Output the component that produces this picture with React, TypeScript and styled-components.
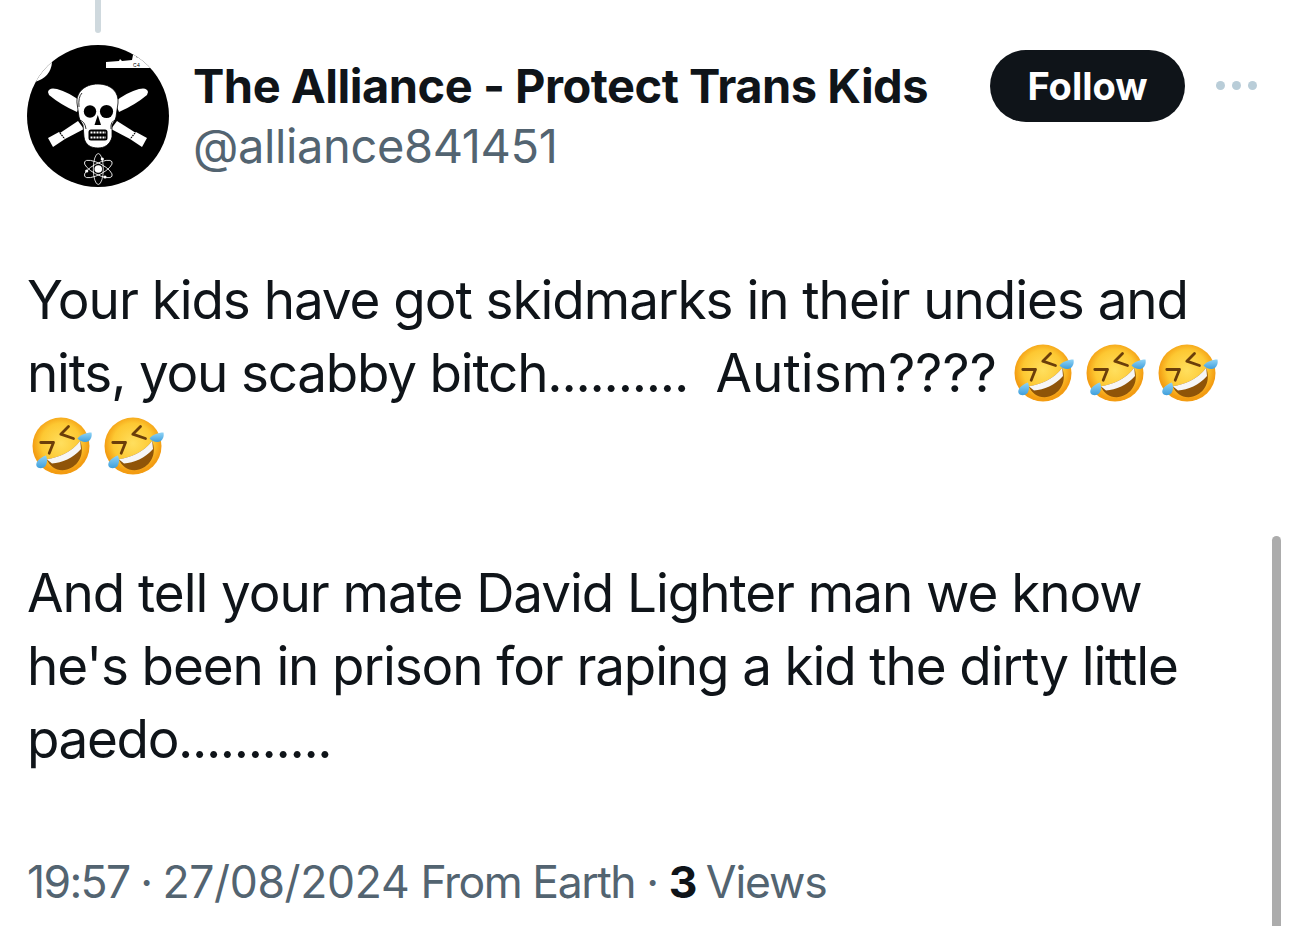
import React from "react";
import styled, { createGlobalStyle } from "styled-components";

const Global = createGlobalStyle`
  html, body { margin: 0; padding: 0; background: #fff; }
  #root { width: 1290px; height: 926px; }
`;
const Page = styled.div`
  position: relative; width: 1290px; height: 926px; overflow: hidden; background: #fff;
  display: flex; flex-direction: column; font-family: Inter, "Liberation Sans", sans-serif; color: #0f1419;
`;
const ThreadLine = styled.div`
  width: 6px; height: 33px; margin-left: 95px; background: #cfd9de; border-radius: 0 0 3px 3px; flex: none;
`;
const Header = styled.header`
  display: flex; align-items: flex-start; margin-top: 12px; padding-left: 27px; height: 142px; flex: none;
`;
const Avatar = styled.svg`
  width: 142px; height: 142px; flex: none; display: block;
`;
const Names = styled.div`
  margin-left: 24px; width: 797px; flex: none; display: flex; flex-direction: column; padding-top: 11px;
`;
const Name = styled.div`
  font-size: 47px; line-height: 60px; font-weight: 700; letter-spacing: -0.5px; white-space: nowrap;
`;
const Handle = styled.div`
  font-size: 47px; line-height: 60px; font-weight: 400; color: #536471; letter-spacing: -0.37px; white-space: nowrap;
`;
const FollowButton = styled.button`
  width: 195px; height: 72px; margin-top: 5px; border: 0; border-radius: 36px; background: #0f1419; color: #fff; flex: none;
  font-family: Inter, sans-serif; font-size: 38px; font-weight: 700; letter-spacing: 0; padding: 0;
`;
const More = styled.div`
  display: flex; gap: 7px; margin: 36px 0 0 31px; flex: none;
`;
const Dot = styled.span`
  width: 9px; height: 9px; border-radius: 50%; background: #b9cdd8;
`;
const Body = styled.main`
  margin-top: 77px; padding-left: 27px; display: flex; flex-direction: column;
`;
const Line = styled.div`
  height: 73.2px; line-height: 73.2px; font-size: 53px; letter-spacing: -1.05px; white-space: pre; display: flex; align-items: center;
`;
const Tracked = styled.span<{ $spacing: number }>`
  letter-spacing: ${(p) => p.$spacing}px;
`;
const EmojiIcon = styled.svg<{ $start?: number }>`
  width: 62px; height: 62px; margin-left: ${(p) => p.$start ?? 10}px; flex: none;
`;
const Meta = styled.footer`
  margin-top: 76px; padding-left: 27px; font-size: 44.5px; line-height: 60px; color: #536471; letter-spacing: -1.15px; white-space: pre;
`;
const Count = styled.b`
  color: #0f1419; font-weight: 700; letter-spacing: -3px;
`;
const Scrollbar = styled.div`
  position: absolute; left: 1272px; top: 536px; bottom: 0; width: 9px; background: #acacac; border-radius: 4.5px 4.5px 0 0;
`;

const Emoji = ({ start }: { start?: number }) => (
  <EmojiIcon $start={start} viewBox="0 0 62 62">
    <defs>
      <radialGradient id="face" cx="50%" cy="45%" r="50%">
        <stop offset="0%" stopColor="#ffdf5e" />
        <stop offset="70%" stopColor="#fdc832" />
        <stop offset="100%" stopColor="#f39c12" />
      </radialGradient>
      <linearGradient id="drop" x1="0" y1="0" x2="0" y2="1">
        <stop offset="0%" stopColor="#8fd3f6" />
        <stop offset="100%" stopColor="#3f9fdc" />
      </linearGradient>
    </defs>
    <circle cx="30" cy="30" r="28.5" fill="url(#face)" />
    <path d="M15.8 43.2 C27 42 41 36 49.2 24.8 C54 38 48 50 36 53.5 C27 56 19 51 15.8 43.2Z" fill="#8f5408" />
    <path d="M15.8 43.2 C27 42 41 36 49.2 24.8 L50 33 C42 42 31 47 21 47.5Z" fill="#f6f6f6" />
    <path d="M37.5 10.5 L29.8 18.2 L42.5 22.5 M9.8 26.5 L22.5 26.5 L18.2 37.2" fill="none" stroke="#6b3e0a" strokeWidth="2.8" strokeLinecap="round" strokeLinejoin="round" />
    <path d="M46.5 22.5 C49 19 55 16.5 60.5 16.5 C61.5 21 59 26 54.5 26 C51 26 48.5 24.5 46.5 22.5Z" fill="url(#drop)" />
    <path d="M15 39.5 C16.5 43 16.5 47 14.5 50 C12 53 7 53 5.5 50 C4 46 9 41.5 15 39.5Z" fill="url(#drop)" />
  </EmojiIcon>
);

export default function App() {
  return (
    <Page>
      <Global />
      <ThreadLine />
      <Header>
        <Avatar viewBox="0 0 142 142">
          <defs>
            <clipPath id="disc"><circle cx="71" cy="71" r="71" /></clipPath>
          </defs>
          <g clipPath="url(#disc)">
            <rect width="142" height="142" fill="#000" />
            <path d="M8 37 Q24 32 25 17 L8 17Z" fill="#fff" />
            <path d="M79 23 V17 L92 16 L93 14 L95 16 L105 15 L106 10 L109 10 L110 13 L112 9 L130 23Z" fill="#fff" />
            <text x="106" y="22" fontSize="5" fontFamily="Inter, sans-serif" fill="#000">C4</text>
            <path d="M21 47 Q22 42 30 44 Q44 48 54 57 L50 67 Q34 60 22 50Z" fill="#fff" />
            <path d="M121 47 Q120 42 112 44 Q98 48 88 57 L92 67 Q108 60 120 50Z" fill="#fff" />
            <path d="M33 88 L51 76 L57 84 L38 94Z" fill="#fff" />
            <path d="M109 88 L90 76 L84 84 L103 94Z" fill="#fff" />
            <path d="M21 93 L32 87 L38 94 L26 102Z" fill="#fff" />
            <path d="M120 93 L109 87 L103 94 L115 102Z" fill="#fff" />
            <path d="M33 88 L37 93 M108 88 L104 93" stroke="#000" strokeWidth="1.2" strokeDasharray="1.5 1" />
            <path d="M71 39 C85 39 92 48 91 58 L89 72 L88 75 L85 80 L85 92 C83 100 77 103 71 103 C64 103 58 100 57 92 L56 80 L53 75 L52 72 L50 58 C49 48 57 39 71 39Z" fill="#fff" stroke="#000" strokeWidth="0.8" />
            <path d="M52 75 Q58 76 59 84 M89 75 Q83 76 84 84 M55 48 Q51 52 52 62" fill="none" stroke="#000" strokeWidth="0.8" />
            <circle cx="63" cy="66.5" r="6.2" fill="#000" />
            <circle cx="79.5" cy="66.5" r="6.6" fill="#000" />
            <path d="M70.8 70 L67.5 80 L74 80Z" fill="#000" />
            <rect x="61.5" y="84.5" width="19" height="11" rx="2.5" fill="#000" />
            <path d="M63.5 87.5 H79 M63.5 92.5 H79" stroke="#fff" strokeWidth="2" strokeDasharray="2 1" />
            <g fill="none" stroke="#fff" strokeWidth="0.8">
              <ellipse cx="71.3" cy="124" rx="15.5" ry="5.5" transform="rotate(28 71.3 124)" />
              <ellipse cx="71.3" cy="124" rx="15.5" ry="5.5" transform="rotate(-28 71.3 124)" />
              <ellipse cx="71.3" cy="124" rx="15.5" ry="5" transform="rotate(90 71.3 124)" />
            </g>
            <circle cx="71.3" cy="124" r="3.8" fill="#fff" />
            <circle cx="59.7" cy="126" r="1.6" fill="#fff" />
            <circle cx="75.3" cy="114" r="1.6" fill="#fff" />
            <circle cx="78" cy="132" r="1.6" fill="#fff" />
          </g>
        </Avatar>
        <Names>
          <Name>The Alliance - Protect Trans Kids</Name>
          <Handle>@alliance841451</Handle>
        </Names>
        <FollowButton>Follow</FollowButton>
        <More><Dot /><Dot /><Dot /></More>
      </Header>
      <Body>
        <Line>Your kids have got skidmarks in their undies and</Line>
        <Line>
          <Tracked $spacing={-1.2}>nits, you scabby bitch..........  </Tracked>
          <Tracked $spacing={0.05}>Autism???? </Tracked>
          <Emoji start={1} /><Emoji /><Emoji />
        </Line>
        <Line><Emoji start={4} /><Emoji /></Line>
        <Line> </Line>
        <Line>And tell your mate David Lighter man we know</Line>
        <Line><Tracked $spacing={-1.13}>he's been in prison for raping a kid the dirty little</Tracked></Line>
        <Line><Tracked $spacing={-1.35}>paedo...........</Tracked></Line>
      </Body>
      <Meta>
        <Tracked $spacing={-1.65}>19:57 · </Tracked>
        <Tracked $spacing={-0.35}>27/08/2024</Tracked>
        <Tracked $spacing={-1.44}> From Earth · </Tracked>
        <Count>3</Count> Views
      </Meta>
      <Scrollbar />
    </Page>
  );
}
